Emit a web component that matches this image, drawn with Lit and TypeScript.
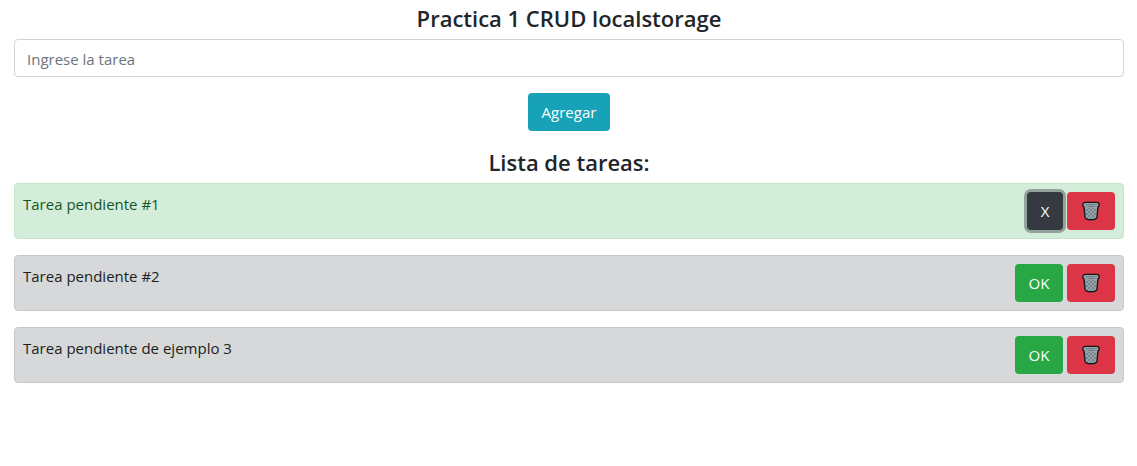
import { LitElement, html, css, svg } from "lit";
import { customElement, state } from "lit/decorators.js";
import { classMap } from "lit/directives/class-map.js";

interface Task {
  text: string;
  done: boolean;
}

const trashIcon = svg`
  <svg class="trash" viewBox="0 0 18 20" aria-hidden="true">
    <path d="M1.9 5 L3.1 16.4 Q3.5 18.8 9 18.8 Q14.5 18.8 14.9 16.4 L16.1 5 Z" fill="#98a4aa" stroke="#15181a" stroke-width="1.4" stroke-linejoin="round"/>
    <path d="M3.6 7.5 L13 17 M7 7 L14 13.8 M11 7 L14.6 10.4 M4 12 L8.8 17.6 M14.4 7.5 L5 17 M11 7 L4 13.8 M7 7 L3.6 10.4 M14 12 L9.2 17.6" fill="none" stroke="#67747b" stroke-width="0.7"/>
    <rect x="0.8" y="1.4" width="16.4" height="4.8" rx="2.4" fill="#9ba6ab" stroke="#15181a" stroke-width="1.3"/>
    <path d="M2.6 5 Q9 6.6 15.4 5 L15.2 7 H2.8 Z" fill="#98a4aa"/>
    <path d="M3.6 3.6 H14.4" fill="none" stroke="#77848a" stroke-width="1.2" stroke-linecap="round"/>
  </svg>`;

@customElement("app-root")
export class AppRoot extends LitElement {
  static styles = css`
    :host {
      display: block;
      padding: 3px 13px 16px 14px;
      background: #fff;
      color: #212529;
      font: 400 15px/24px "Open Sans", "Noto Sans", sans-serif;
    }
    * {
      box-sizing: border-box;
    }
    .title {
      margin: 0 0 6px;
      font-size: 22px;
      font-weight: 600;
      line-height: 30px;
      text-align: center;
    }
    .form {
      display: flex;
      flex-direction: column;
      align-items: center;
      gap: 16px;
      margin-bottom: 16px;
    }
    .field {
      width: 100%;
      height: 38px;
      padding: 7px 12px 5px;
      border: 1px solid #ced4da;
      border-radius: 4px;
      background: #fff;
      color: #495057;
      font: inherit;
    }
    .field::placeholder {
      color: #6c757d;
      opacity: 1;
    }
    .list {
      display: grid;
      gap: 16px;
      margin: 0;
      padding: 0;
      list-style: none;
    }
    .task {
      display: flex;
      align-items: flex-start;
      justify-content: space-between;
      padding: 8px;
      border: 1px solid #c6c8ca;
      border-radius: 4px;
      background: #d6d8d9;
      color: #1b1e21;
    }
    .task.done {
      border-color: #c3e6cb;
      background: #d4edda;
      color: #155724;
    }
    .actions {
      display: flex;
      gap: 4px;
    }
    .btn {
      display: flex;
      align-items: center;
      justify-content: center;
      height: 38px;
      padding: 0 8px;
      border: 1px solid transparent;
      border-radius: 4px;
      color: #fff;
      font: inherit;
      cursor: pointer;
    }
    .add {
      min-width: 82px;
      background: #17a2b8;
    }
    .ok {
      min-width: 48px;
      background: #28a745;
    }
    .undo {
      min-width: 36px;
      background: #343a40;
      box-shadow: 0 0 0 3px rgba(82, 88, 93, 0.5);
    }
    .remove {
      min-width: 48px;
      background: #dc3545;
    }
    .trash {
      flex: none;
      width: 18px;
      height: 20px;
    }
  `;

  @state() private tasks: Task[] = [
    { text: "Tarea pendiente #1", done: true },
    { text: "Tarea pendiente #2", done: false },
    { text: "Tarea pendiente de ejemplo 3", done: false },
  ];

  private add(event: Event) {
    event.preventDefault();
    const field = this.renderRoot.querySelector<HTMLInputElement>(".field")!;
    const text = field.value.trim();
    if (!text) return;
    this.tasks = [...this.tasks, { text, done: false }];
    field.value = "";
  }

  private toggle(task: Task) {
    this.tasks = this.tasks.map((t) => (t === task ? { ...t, done: !t.done } : t));
  }

  private remove(task: Task) {
    this.tasks = this.tasks.filter((t) => t !== task);
  }

  render() {
    return html`
      <h1 class="title">Practica 1 CRUD localstorage</h1>
      <form class="form" @submit=${this.add}>
        <input class="field" type="text" placeholder="Ingrese la tarea" aria-label="Ingrese la tarea" />
        <button class="btn add" type="submit">Agregar</button>
      </form>
      <h2 class="title">Lista de tareas:</h2>
      <ul class="list">
        ${this.tasks.map(
          (task) => html`
            <li class=${classMap({ task: true, done: task.done })}>
              <span>${task.text}</span>
              <div class="actions">
                <button
                  class=${classMap({ btn: true, undo: task.done, ok: !task.done })}
                  type="button"
                  @click=${() => this.toggle(task)}
                >${task.done ? "X" : "OK"}</button>
                <button class="btn remove" type="button" aria-label="Eliminar" @click=${() => this.remove(task)}>
                  ${trashIcon}
                </button>
              </div>
            </li>
          `
        )}
      </ul>
    `;
  }
}
